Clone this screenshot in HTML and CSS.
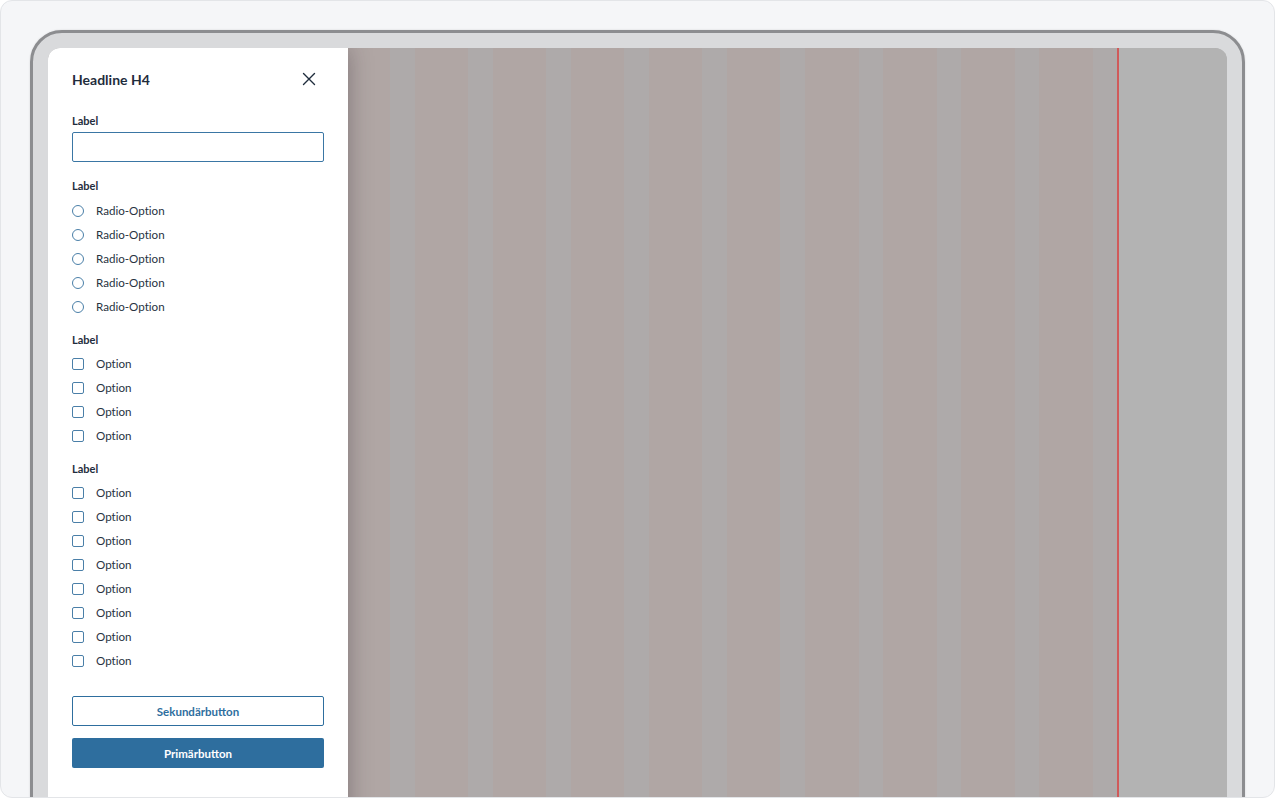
FILE: index.html
```html
<!DOCTYPE html>
<html lang="de">
<head>
<meta charset="utf-8">
<title>Panel</title>
<link rel="stylesheet" href="styles.css">
</head>
<body>
<div class="page">
  <div class="device">
    <div class="screen">
      <aside class="panel">
        <div class="panel-head">
          <h4 class="title">Headline H4</h4>
          <button class="close" aria-label="Schließen">
            <svg width="14" height="14" viewBox="0 0 14 14"><path d="M1.5 1.5 L12.5 12.5 M12.5 1.5 L1.5 12.5" stroke="#1f2d3d" stroke-width="1.4" fill="none" stroke-linecap="round"/></svg>
          </button>
        </div>

        <div class="field">
          <div class="label">Label</div>
          <input class="text-input" type="text">
        </div>

        <div class="group radios">
          <div class="label">Label</div>
          <ul class="options">
            <li class="option"><span class="radio"></span>Radio-Option</li>
            <li class="option"><span class="radio"></span>Radio-Option</li>
            <li class="option"><span class="radio"></span>Radio-Option</li>
            <li class="option"><span class="radio"></span>Radio-Option</li>
            <li class="option"><span class="radio"></span>Radio-Option</li>
          </ul>
        </div>

        <div class="group">
          <div class="label">Label</div>
          <ul class="options">
            <li class="option"><span class="check"></span>Option</li>
            <li class="option"><span class="check"></span>Option</li>
            <li class="option"><span class="check"></span>Option</li>
            <li class="option"><span class="check"></span>Option</li>
          </ul>
        </div>

        <div class="group">
          <div class="label">Label</div>
          <ul class="options">
            <li class="option"><span class="check"></span>Option</li>
            <li class="option"><span class="check"></span>Option</li>
            <li class="option"><span class="check"></span>Option</li>
            <li class="option"><span class="check"></span>Option</li>
            <li class="option"><span class="check"></span>Option</li>
            <li class="option"><span class="check"></span>Option</li>
            <li class="option"><span class="check"></span>Option</li>
            <li class="option"><span class="check"></span>Option</li>
          </ul>
        </div>

        <div class="actions">
          <button class="btn btn-secondary">Sekundärbutton</button>
          <button class="btn btn-primary">Primärbutton</button>
        </div>
      </aside>

      <div class="grid">
        <div class="col col-first"></div>
        <div class="gutter"></div><div class="col"></div>
        <div class="gutter"></div><div class="col"></div>
        <div class="gutter"></div><div class="col"></div>
        <div class="gutter"></div><div class="col"></div>
        <div class="gutter"></div><div class="col"></div>
        <div class="gutter"></div><div class="col"></div>
        <div class="gutter"></div><div class="col"></div>
        <div class="gutter"></div><div class="col"></div>
        <div class="gutter"></div><div class="col"></div>
        <div class="gutter"></div>
      </div>
      <div class="redline"></div>
      <div class="rest"></div>
    </div>
  </div>
</div>
</body>
</html>
```

FILE: styles.css
```css
* { box-sizing: border-box; }

html, body {
  margin: 0;
  padding: 0;
  background: #ffffff;
}

body {
  font-family: Lato, "Liberation Sans", sans-serif;
  font-variant-ligatures: none;
  color: #1f2d3d;
}

.page {
  width: 1275px;
  height: 798px;
  background: #f5f6f8;
  border: 1px solid #e3e5e8;
  border-radius: 12px;
  overflow: hidden;
  padding: 29px 0 0 29px;
}

.device {
  width: 1215px;
  height: 820px;
  background: #d9dadc;
  border: 3px solid #8c8d90;
  border-radius: 32px;
  padding: 15px;
  box-shadow: 0 0 2px rgba(0,0,0,0.15);
}

.screen {
  display: flex;
  height: 800px;
  border-radius: 12px;
  overflow: hidden;
  background: #b3b3b3;
}

/* ---------- panel ---------- */
.panel {
  position: relative;
  z-index: 2;
  flex: 0 0 300px;
  background: #ffffff;
  padding: 19px 24px 0 24px;
  box-shadow: 0 0 22px rgba(40, 30, 40, 0.35);
  display: flex;
  flex-direction: column;
}

.panel-head {
  display: flex;
  align-items: center;
  justify-content: space-between;
  height: 24px;
}

.title {
  margin: 0;
  font-size: 14px;
  font-weight: 700;
  color: #1f2d3d;
}

.close {
  border: 0;
  background: none;
  padding: 0;
  width: 24px;
  height: 24px;
  display: flex;
  align-items: center;
  justify-content: center;
  margin-right: 3px;
}

.field {
  margin-top: 22px;
  display: flex;
  flex-direction: column;
}

.label {
  font-size: 11px;
  font-weight: 700;
  line-height: 16px;
  height: 16px;
  color: #1f2d3d;
}

.text-input {
  margin-top: 3px;
  height: 30px;
  width: 100%;
  border: 1px solid #3a76a4;
  border-radius: 2px;
  background: #fff;
}

.group {
  margin-top: 13px;
}

.field + .group {
  margin-top: 16px;
}

.options {
  list-style: none;
  margin: 4px 0 0 0;
  padding: 0;
}

.radios .options {
  margin-top: 5px;
}

.option {
  display: flex;
  align-items: center;
  height: 24px;
  padding-bottom: 1px;
  font-size: 11.6px;
  color: #28333f;
}

.radio, .check {
  flex: 0 0 12px;
  width: 12px;
  height: 12px;
  border: 1px solid #4a7fa8;
  margin-right: 12px;
  margin-top: 1px;
  background: #fff;
}

.radio { border-radius: 50%; }
.check { border-radius: 2px; }

.actions {
  margin-top: 23px;
  display: flex;
  flex-direction: column;
  gap: 12px;
}

.btn {
  height: 30px;
  width: 100%;
  border-radius: 2px;
  font-family: Lato, "Liberation Sans", sans-serif;
  font-size: 11.5px;
  font-weight: 700;
  cursor: pointer;
}

.btn-secondary {
  background: #fff;
  border: 1.5px solid #2e6e9e;
  color: #2e6e9e;
}

.btn-primary {
  background: #2e6e9e;
  border: 0;
  color: #fff;
}

/* ---------- grid overlay ---------- */
.grid {
  flex: 0 0 769px;
  display: flex;
}

.col {
  flex: 0 0 53.6px;
  background: #b0a6a4;
}

.col-first {
  flex-basis: 42px;
}

.gutter {
  flex: 0 0 24.5px;
  background: #aeaaaa;
}

.redline {
  flex: 0 0 2px;
  background: #d05a5a;
}

.rest {
  flex: 1;
  background: #b3b3b3;
}
```
